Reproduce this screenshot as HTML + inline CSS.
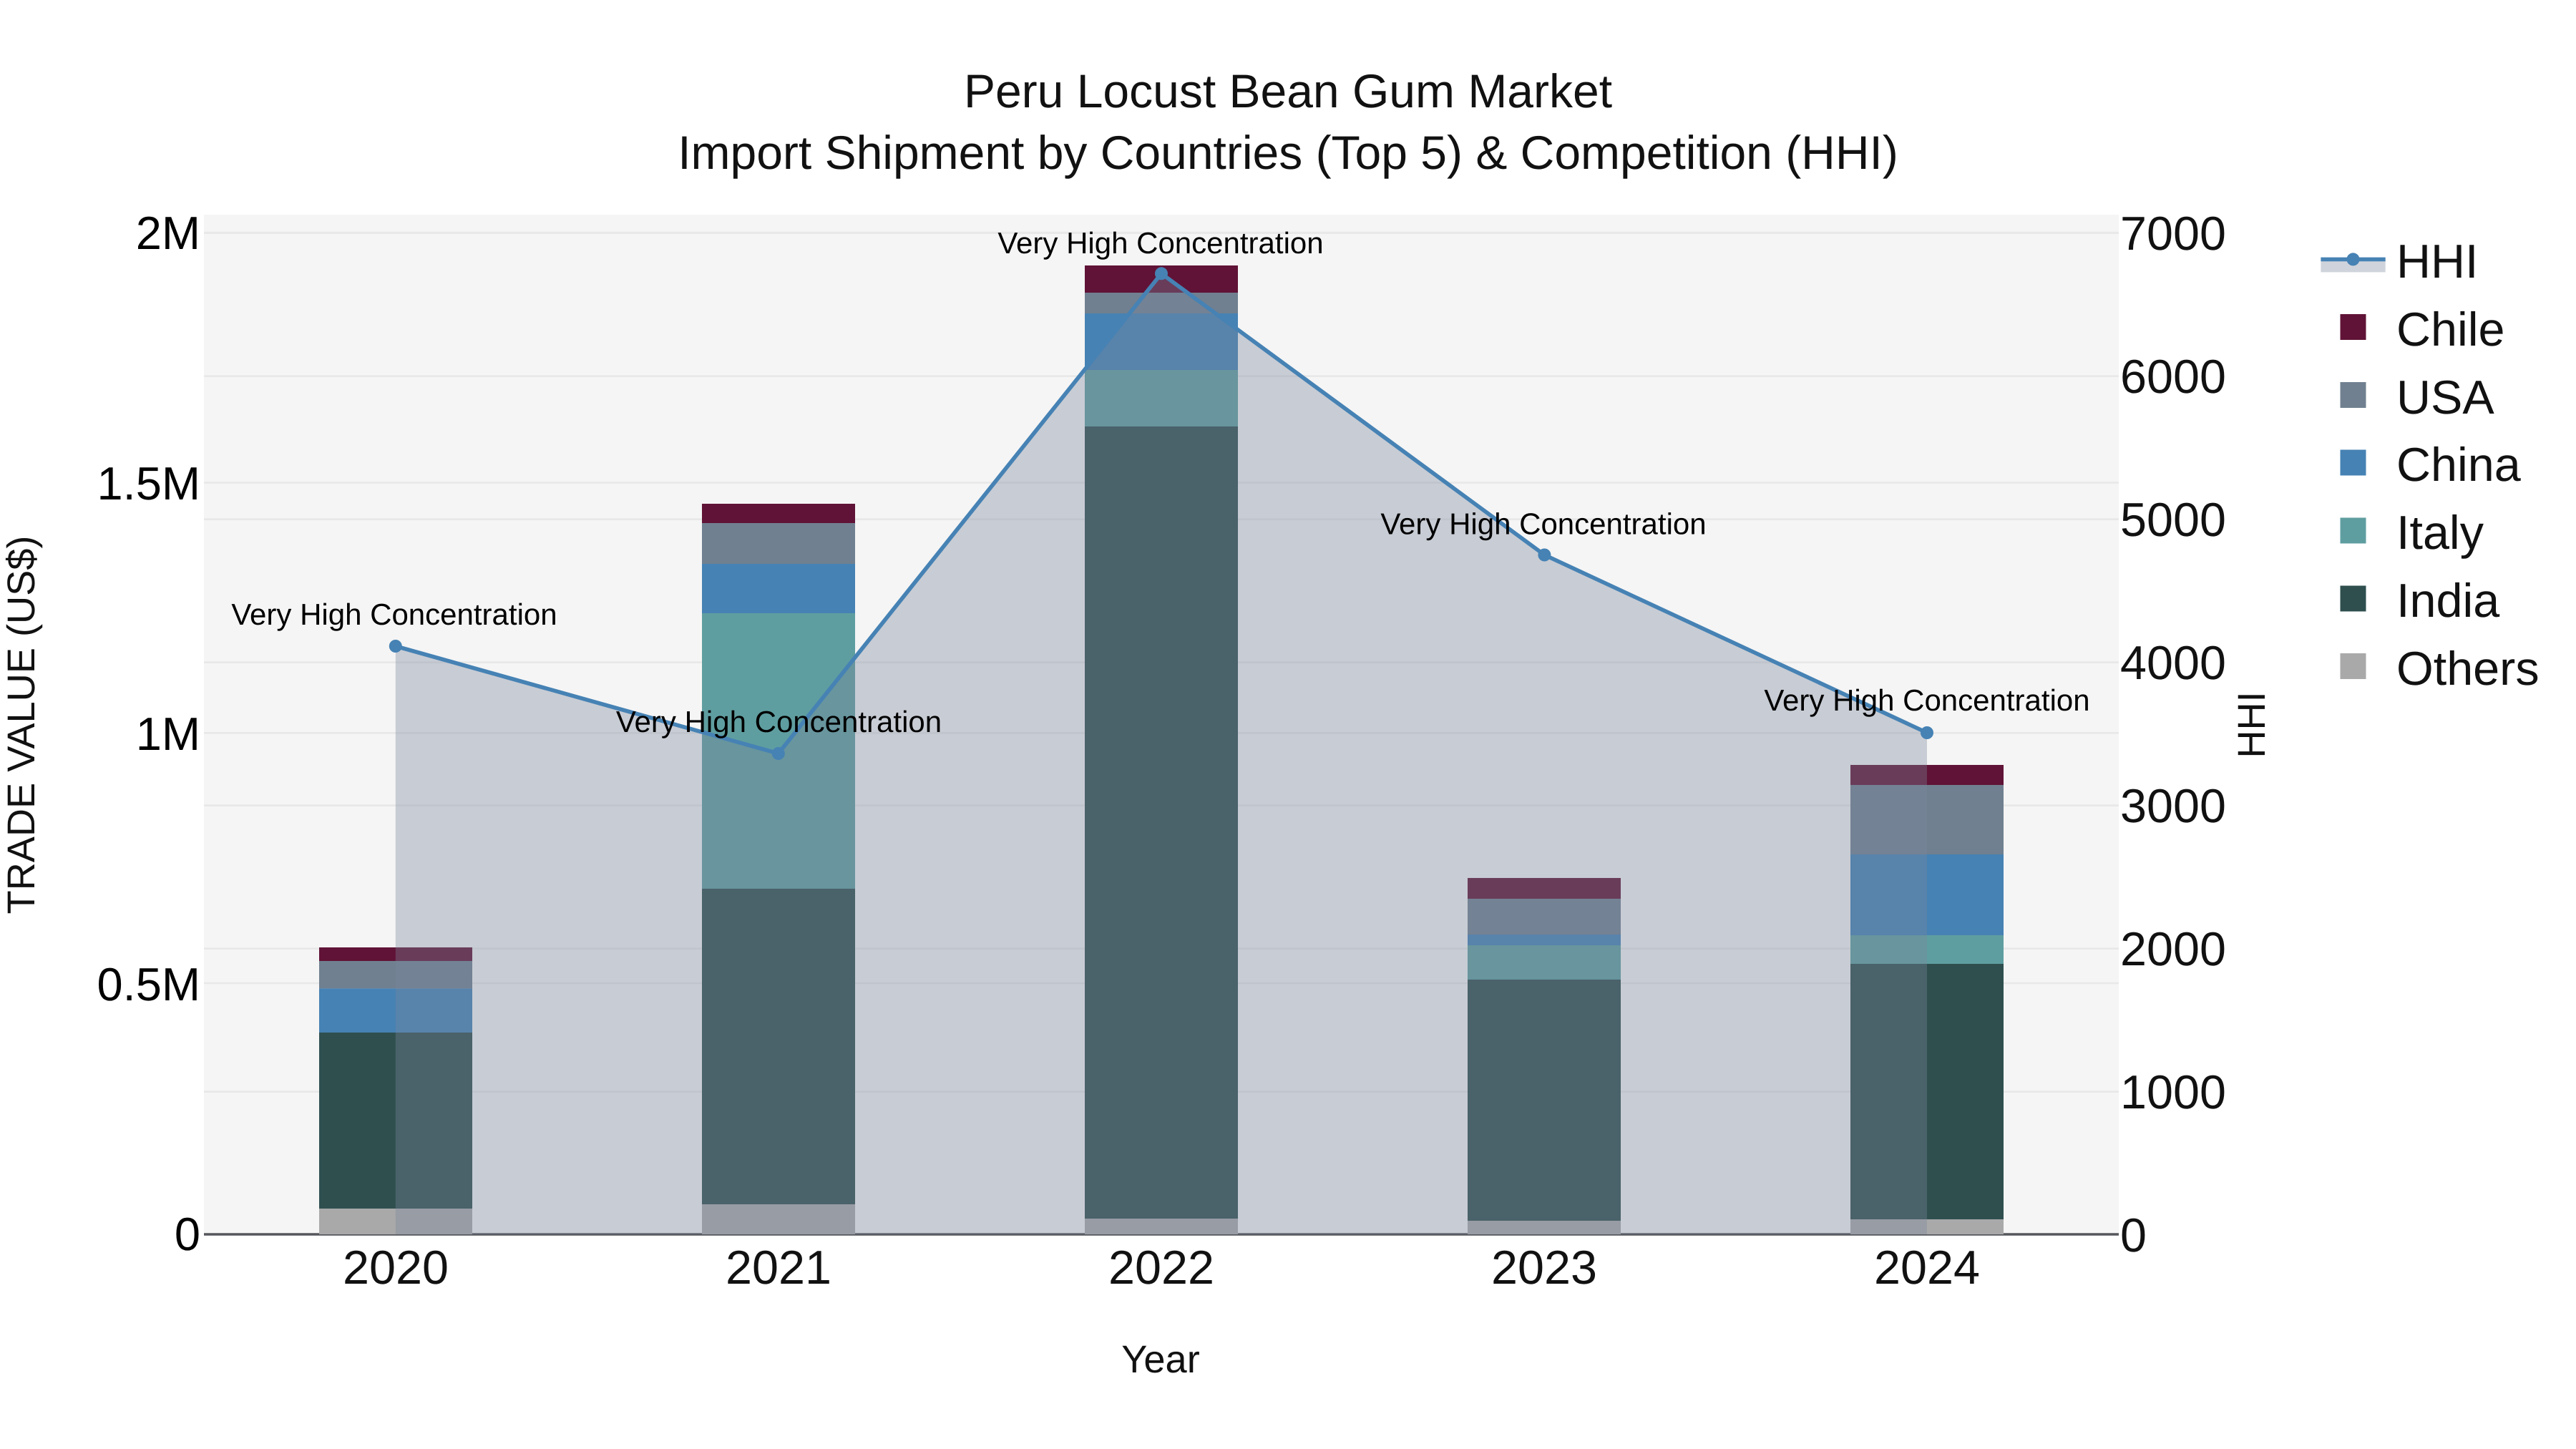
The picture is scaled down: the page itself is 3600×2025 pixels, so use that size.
<!DOCTYPE html>
<html lang="en">
<head>
<meta charset="utf-8">
<title>Peru Locust Bean Gum Market</title>
<style>
html,body{margin:0;padding:0;background:#fff;width:3600px;height:2025px;overflow:hidden}
svg{display:block}
text{font-family:"Liberation Sans",Arial,sans-serif;text-rendering:geometricPrecision}
.t{font-size:66px;fill:#111;text-anchor:middle}
.yl{font-size:65px;fill:#000;text-anchor:end}
.yr{font-size:66.5px;fill:#111;text-anchor:start}
.xt{font-size:66.5px;fill:#111;text-anchor:middle}
.ax{font-size:54.2px;fill:#111;text-anchor:middle}
.lg{font-size:66.5px;fill:#111}
.an{font-size:42px;fill:#000;text-anchor:middle}
</style>
</head>
<body>
<svg width="3600" height="2025" viewBox="0 0 3600 2025" xmlns="http://www.w3.org/2000/svg">
<rect width="3600" height="2025" fill="#fff"/>
<rect x="285" y="300" width="2676" height="1425" fill="#f5f5f5"/>

<!-- gridlines -->
<g stroke="#e8e8e8" stroke-width="2.6">
<path d="M285 325.7H2961M285 525.7H2961M285 725.7H2961M285 925.7H2961M285 1125.7H2961M285 1325.7H2961M285 1525.7H2961"/>
<path d="M285 325H2961M285 674.6H2961M285 1024.3H2961M285 1374H2961"/>
</g>
<path d="M285 1725H2961" stroke="#55575b" stroke-width="3.6"/>

<!-- bars -->
<g>
<rect x="446" y="1324" width="214" height="19" fill="#601336"/>
<rect x="446" y="1343" width="214" height="38.4" fill="#708090"/>
<rect x="446" y="1381.4" width="214" height="61.6" fill="#4682b4"/>
<rect x="446" y="1443" width="214" height="246" fill="#2f4f4f"/>
<rect x="446" y="1689" width="214" height="36" fill="#a9a9a9"/>

<rect x="981" y="704" width="214" height="27" fill="#601336"/>
<rect x="981" y="731" width="214" height="57" fill="#708090"/>
<rect x="981" y="788" width="214" height="69" fill="#4682b4"/>
<rect x="981" y="857" width="214" height="385" fill="#5f9ea0"/>
<rect x="981" y="1242" width="214" height="441" fill="#2f4f4f"/>
<rect x="981" y="1683" width="214" height="42" fill="#a9a9a9"/>

<rect x="1516" y="371" width="214" height="38" fill="#601336"/>
<rect x="1516" y="409" width="214" height="29" fill="#708090"/>
<rect x="1516" y="438" width="214" height="79" fill="#4682b4"/>
<rect x="1516" y="517" width="214" height="79" fill="#5f9ea0"/>
<rect x="1516" y="596" width="214" height="1107" fill="#2f4f4f"/>
<rect x="1516" y="1703" width="214" height="22" fill="#a9a9a9"/>

<rect x="2051" y="1227" width="214" height="29" fill="#601336"/>
<rect x="2051" y="1256" width="214" height="50" fill="#708090"/>
<rect x="2051" y="1306" width="214" height="15" fill="#4682b4"/>
<rect x="2051" y="1321" width="214" height="48" fill="#5f9ea0"/>
<rect x="2051" y="1369" width="214" height="337" fill="#2f4f4f"/>
<rect x="2051" y="1706" width="214" height="19" fill="#a9a9a9"/>

<rect x="2586" y="1069" width="214" height="28" fill="#601336"/>
<rect x="2586" y="1097" width="214" height="97" fill="#708090"/>
<rect x="2586" y="1194" width="214" height="113" fill="#4682b4"/>
<rect x="2586" y="1307" width="214" height="40" fill="#5f9ea0"/>
<rect x="2586" y="1347" width="214" height="357" fill="#2f4f4f"/>
<rect x="2586" y="1704" width="214" height="21" fill="#a9a9a9"/>
</g>

<!-- HHI area and line -->
<path d="M552.8 1725V903L1087.8 1053L1623 382.3L2158.4 775.5L2693 1024V1725Z" fill="rgb(122,133,154)" fill-opacity="0.36"/>
<path d="M552.8 903L1087.8 1053L1623 382.3L2158.4 775.5L2693 1024" fill="none" stroke="#4682b4" stroke-width="5.6" stroke-linejoin="round"/>
<g fill="#4682b4">
<circle cx="552.8" cy="903" r="9"/>
<circle cx="1087.8" cy="1053" r="9"/>
<circle cx="1623" cy="382.3" r="9"/>
<circle cx="2158.4" cy="775.5" r="9"/>
<circle cx="2693" cy="1024" r="9"/>
</g>

<!-- annotations -->
<text class="an" x="551" y="873">Very High Concentration</text>
<text class="an" x="1088.5" y="1023">Very High Concentration</text>
<text class="an" x="1622" y="354">Very High Concentration</text>
<text class="an" x="2157" y="746.5">Very High Concentration</text>
<text class="an" x="2693" y="993">Very High Concentration</text>

<!-- title -->
<text class="t" x="1800" y="150">Peru Locust Bean Gum Market</text>
<text class="t" x="1800" y="236">Import Shipment by Countries (Top 5) &amp; Competition (HHI)</text>

<!-- left axis ticks -->
<text class="yl" x="280" y="348">2M</text>
<text class="yl" x="280" y="698">1.5M</text>
<text class="yl" x="280" y="1048">1M</text>
<text class="yl" x="280" y="1398">0.5M</text>
<text class="yl" x="280" y="1747">0</text>

<!-- right axis ticks -->
<text class="yr" x="2963" y="349">7000</text>
<text class="yr" x="2963" y="549">6000</text>
<text class="yr" x="2963" y="749">5000</text>
<text class="yr" x="2963" y="949">4000</text>
<text class="yr" x="2963" y="1149">3000</text>
<text class="yr" x="2963" y="1349">2000</text>
<text class="yr" x="2963" y="1549">1000</text>
<text class="yr" x="2963" y="1749">0</text>

<!-- x ticks -->
<text class="xt" x="553" y="1794">2020</text>
<text class="xt" x="1088" y="1794">2021</text>
<text class="xt" x="1623" y="1794">2022</text>
<text class="xt" x="2158" y="1794">2023</text>
<text class="xt" x="2693" y="1794">2024</text>

<!-- axis titles -->
<text class="ax" x="1622" y="1918">Year</text>
<text class="ax" transform="translate(48 1013) rotate(-90)">TRADE VALUE (US$)</text>
<text class="ax" transform="translate(3165 1013) rotate(-90)">HHI</text>

<!-- legend -->
<rect x="3243.4" y="362.4" width="90.3" height="18" fill="rgb(122,133,154)" fill-opacity="0.36"/>
<path d="M3243.4 362.4H3333.7" stroke="#4682b4" stroke-width="5.6"/>
<circle cx="3288.5" cy="362.4" r="9" fill="#4682b4"/>
<rect x="3270.5" y="439" width="36" height="36" fill="#601336"/>
<rect x="3270.5" y="534" width="36" height="36" fill="#708090"/>
<rect x="3270.5" y="628.5" width="36" height="36" fill="#4682b4"/>
<rect x="3270.5" y="723.5" width="36" height="36" fill="#5f9ea0"/>
<rect x="3270.5" y="818.5" width="36" height="36" fill="#2f4f4f"/>
<rect x="3270.5" y="913" width="36" height="36" fill="#a9a9a9"/>
<text class="lg" x="3349" y="388">HHI</text>
<text class="lg" x="3349" y="483">Chile</text>
<text class="lg" x="3349" y="578">USA</text>
<text class="lg" x="3349" y="672">China</text>
<text class="lg" x="3349" y="767">Italy</text>
<text class="lg" x="3349" y="862">India</text>
<text class="lg" x="3349" y="957">Others</text>
</svg>
</body>
</html>
